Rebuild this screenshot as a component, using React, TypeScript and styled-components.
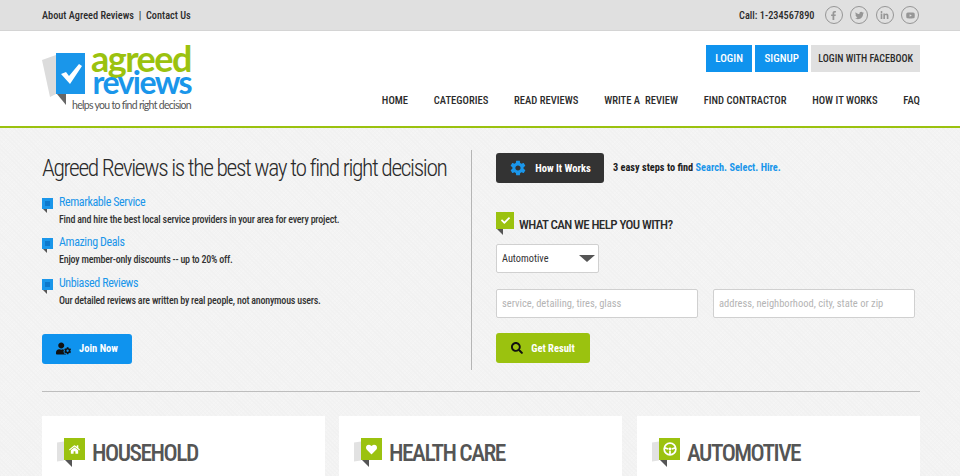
import React from "react";
import styled, { createGlobalStyle } from "styled-components";
import { FaFacebookF, FaTwitter, FaLinkedinIn, FaYoutube, FaHeart, FaHome, FaSearch, FaCheck, FaUserCog } from "react-icons/fa";
import { IoMdSettings } from "react-icons/io";

const GlobalStyle = createGlobalStyle`
  html, body {
    margin: 0;
    padding: 0;
    height: 476px;
    overflow: hidden;
    font-family: "Roboto", "Liberation Sans", sans-serif;
    font-stretch: 75%;
    background-color: #f3f3f3;
    color: #222;
  }
  * { box-sizing: border-box; }
`;

const Page = styled.div`
  width: 960px;
  height: 476px;
  overflow: hidden;
  background-color: #f3f3f3;
  background-image: repeating-linear-gradient(45deg, #f1f1f1 0 1px, transparent 1px 3px),
    repeating-linear-gradient(-45deg, #f5f5f5 0 1px, transparent 1px 3px);
`;

const TopBar = styled.div`
  height: 31px;
  background: #e0e0e0;
  border-bottom: 1px solid #d4d4d4;
  padding: 0 41px 0 42px;
  display: flex;
  align-items: center;
  justify-content: space-between;
`;

const TopLinks = styled.div`
  font-size: 10.3px;
  font-weight: 500;
  color: #2b2b2b;
  white-space: nowrap;
`;

const TopRight = styled.div`
  display: flex;
  align-items: center;
  gap: 7.5px;
`;

const Phone = styled.span`
  font-size: 10.3px;
  font-weight: 500;
  color: #2b2b2b;
  margin-right: 2.5px;
`;

const Social = styled.span`
  width: 18px;
  height: 18px;
  border-radius: 50%;
  border: 1px solid #969696;
  color: #969696;
  font-size: 9px;
  display: flex;
  align-items: center;
  justify-content: center;
`;

const Header = styled.header`
  height: 97px;
  background: #fff;
  border-bottom: 2px solid #9bc20f;
  padding: 0 40px 0 42px;
  display: flex;
  justify-content: space-between;
`;

const Logo = styled.div`
  display: flex;
  flex-direction: column;
  align-items: flex-end;
  width: 149px;
  padding-top: 13px;
`;

const LogoRow = styled.div`
  display: flex;
  align-items: flex-start;
  height: 54px;
`;

const LogoMark = styled.svg`
  width: 46px;
  height: 54px;
  margin-top: 9px;
  flex: none;
`;

const LogoWords = styled.div`
  display: flex;
  flex-direction: column;
  align-items: flex-end;
  margin-left: 5px;
  width: 98px;
`;

const LogoGreen = styled.span`
  font-family: "Lato", sans-serif;
  font-stretch: normal;
  font-size: 36px;
  font-weight: 700;
  line-height: 28px;
  letter-spacing: -1.5px;
  color: #9bc20f;
  white-space: nowrap;
`;

const LogoBlue = styled.span`
  font-family: "Lato", sans-serif;
  font-stretch: normal;
  font-size: 32px;
  font-weight: 700;
  line-height: 19px;
  letter-spacing: -1.6px;
  color: #1a96ea;
  white-space: nowrap;
`;

const LogoTag = styled.span`
  font-family: "Lato", sans-serif;
  font-stretch: normal;
  font-size: 10.5px;
  line-height: 14px;
  letter-spacing: -0.7px;
  color: #555;
  white-space: nowrap;
`;

const HeaderRight = styled.div`
  display: flex;
  flex-direction: column;
  align-items: flex-end;
  padding-top: 14px;
`;

const AuthRow = styled.div`
  display: flex;
  gap: 3.5px;
`;

const AuthButton = styled.button<{ $plain?: boolean }>`
  height: 27px;
  border: 0;
  margin: 0;
  padding: 0 ${(p) => (p.$plain ? "7px" : "9px")};
  font-family: "Roboto", sans-serif;
  font-stretch: 75%;
  font-size: ${(p) => (p.$plain ? "10px" : "11px")};
  font-weight: 500;
  background: ${(p) => (p.$plain ? "#e0e0e0" : "#0f93ee")};
  color: ${(p) => (p.$plain ? "#2b2b2b" : "#fff")};
  display: flex;
  align-items: center;
`;

const Nav = styled.nav`
  display: flex;
  gap: 25.8px;
  margin-top: 23px;
`;

const NavLink = styled.span`
  font-size: 10.6px;
  font-weight: 500;
  line-height: 12px;
  color: #2b2b2b;
  white-space: pre;
`;

const Main = styled.main`
  padding: 22px 40px 0 42px;
`;

const Hero = styled.section`
  display: flex;
  height: 220px;
`;

const HeroLeft = styled.div`
  width: 430px;
  border-right: 1px solid #b5b5b5;
`;

const HeroTitle = styled.h1`
  margin: 5px 0 0;
  font-size: 23.5px;
  font-weight: 300;
  line-height: 26px;
  letter-spacing: -1.38px;
  color: #2b2b2b;
  white-space: nowrap;
`;

const Features = styled.ul`
  list-style: none;
  margin: 14px 0 0;
  padding: 0;
  display: flex;
  flex-direction: column;
  gap: 9.3px;
`;

const Feature = styled.li`
  display: flex;
  gap: 6px;
`;

const Bullet = styled.span`
  position: relative;
  width: 11px;
  height: 11px;
  margin-top: 3px;
  background: #1a96ea;
  flex: none;
  display: flex;
  align-items: center;
  justify-content: center;
  &::before {
    content: "";
    width: 5px;
    height: 5px;
    background: #0d78cc;
  }
  &::after {
    content: "";
    position: absolute;
    left: 1px;
    top: 11px;
    border-top: 4px solid #555;
    border-left: 4px solid transparent;
  }
`;

const FeatureTitle = styled.div`
  font-size: 12px;
  line-height: 15px;
  letter-spacing: -0.4px;
  color: #1a96ea;
`;

const FeatureText = styled.div`
  font-size: 10px;
  font-weight: 500;
  line-height: 13px;
  letter-spacing: -0.21px;
  margin-top: 3px;
  color: #333;
`;

const IconButton = styled.button<{ $bg: string; $w: number }>`
  width: ${(p) => p.$w}px;
  height: 30px;
  border: 0;
  margin: 0;
  padding: 0;
  border-radius: 3px;
  background: ${(p) => p.$bg};
  color: #fff;
  font-family: "Roboto", sans-serif;
  font-stretch: 75%;
  font-size: 10.5px;
  font-weight: 700;
  display: flex;
  align-items: center;
  justify-content: center;
  gap: 8px;
`;

const JoinWrap = styled.div`
  margin-top: 27px;
`;

const HeroRight = styled.div`
  padding-left: 24px;
  flex: 1;
`;

const HowRow = styled.div`
  display: flex;
  align-items: center;
  gap: 9px;
  margin-top: 3px;
`;

const HowText = styled.span`
  font-size: 10.3px;
  font-weight: 700;
  color: #1b1b1b;
  margin-top: -2px;
`;

const Blue = styled.span`
  color: #1a96ea;
`;

const HelpRow = styled.div`
  display: flex;
  align-items: flex-start;
  gap: 5px;
  margin-top: 29px;
`;

const CheckBox = styled.span`
  position: relative;
  width: 18px;
  height: 17px;
  background: #9bc20f;
  color: #fff;
  font-size: 9px;
  display: flex;
  align-items: center;
  justify-content: center;
  &::after {
    content: "";
    position: absolute;
    left: 1px;
    top: 17px;
    border-top: 6px solid #555;
    border-left: 6px solid transparent;
  }
`;

const HelpTitle = styled.h2`
  margin: 5px 0 0;
  font-size: 13px;
  font-weight: 500;
  line-height: 15px;
  letter-spacing: -0.6px;
  color: #2b2b2b;
`;

const Select = styled.div`
  width: 103px;
  height: 29px;
  margin-top: 12px;
  background: #fff;
  border: 1px solid #d0d0d0;
  border-radius: 2px;
  padding: 0 3px 0 5px;
  display: flex;
  align-items: center;
  justify-content: space-between;
  font-size: 10.3px;
  color: #333;
  &::after {
    content: "";
    border-top: 7px solid #555;
    border-left: 8px solid transparent;
    border-right: 8px solid transparent;
  }
`;

const InputRow = styled.div`
  display: flex;
  gap: 15px;
  margin-top: 16px;
`;

const Input = styled.div<{ $w: number }>`
  width: ${(p) => p.$w}px;
  height: 29px;
  background: #fff;
  border: 1px solid #d0d0d0;
  border-radius: 2px;
  padding: 0 5px;
  display: flex;
  align-items: center;
  font-size: 10.5px;
  color: #b4b4b4;
`;

const ResultWrap = styled.div`
  margin-top: 15px;
`;

const Rule = styled.hr`
  margin: 21px 0 0;
  border: 0;
  border-top: 1px solid #bdbdbd;
`;

const Cards = styled.section`
  display: flex;
  gap: 14px;
  margin-top: 24px;
`;

const Card = styled.article`
  width: 283px;
  height: 80px;
  background: #fff;
  padding: 22px 15px 0 15px;
  display: flex;
  align-items: flex-start;
  &:last-child {
    margin-left: auto;
  }
`;

const CardIcon = styled.span`
  position: relative;
  width: 21px;
  height: 22px;
  margin: 0 7px 0 7px;
  background: #9bc20f;
  color: #fff;
  font-size: 11px;
  display: flex;
  align-items: center;
  justify-content: center;
  &::before {
    content: "";
    position: absolute;
    left: -7px;
    top: 4px;
    width: 7px;
    height: 19px;
    background: #e2e2e2;
    transform: skewY(-8deg);
  }
  &::after {
    content: "";
    position: absolute;
    left: 1px;
    top: 22px;
    border-top: 7px solid #555;
    border-left: 7px solid transparent;
  }
`;

const CardTitle = styled.h3`
  margin: 2px 0 0;
  font-size: 23.5px;
  font-weight: 500;
  line-height: 26px;
  letter-spacing: -1.5px;
  color: #555;
`;

const WheelIcon = () => (
  <svg width="14" height="14" viewBox="0 0 24 24" fill="none" stroke="#fff" strokeWidth="3">
    <circle cx="12" cy="12" r="10" />
    <path d="M3 10 L9 12 M21 10 L15 12 M12 15 V22" />
    <circle cx="12" cy="12" r="2.5" fill="#fff" stroke="none" />
  </svg>
);

const navItems = ["HOME", "CATEGORIES", "READ REVIEWS", "WRITE A  REVIEW", "FIND CONTRACTOR", "HOW IT WORKS", "FAQ"];

const features = [
  { title: "Remarkable Service", text: "Find and hire the best local service providers in your area for every project." },
  { title: "Amazing Deals", text: "Enjoy member-only discounts -- up to 20% off." },
  { title: "Unbiased Reviews", text: "Our detailed reviews are written by real people, not anonymous users." },
];

const App = () => {
  return (
    <Page>
      <GlobalStyle />
      <TopBar>
        <TopLinks>About Agreed Reviews &nbsp;|&nbsp; Contact Us</TopLinks>
        <TopRight>
          <Phone>Call: 1-234567890</Phone>
          <Social><FaFacebookF /></Social>
          <Social><FaTwitter /></Social>
          <Social><FaLinkedinIn /></Social>
          <Social><FaYoutube /></Social>
        </TopRight>
      </TopBar>
      <Header>
        <Logo>
          <LogoRow>
            <LogoMark viewBox="0 0 46 54">
              <path d="M0 7 L14 2 V41 L8 44 Z" fill="#dcdcdc" />
              <rect x="14" width="29" height="41" fill="#1a96ea" />
              <path d="M15 41 H24 V52 Z" fill="#666" />
              <path d="M19 21 L24 19 L27 23 L37 11 L40 13 L28 31 Z" fill="#fff" />
            </LogoMark>
            <LogoWords>
              <LogoGreen>agreed</LogoGreen>
              <LogoBlue>reviews</LogoBlue>
            </LogoWords>
          </LogoRow>
          <LogoTag>helps you to find right decision</LogoTag>
        </Logo>
        <HeaderRight>
          <AuthRow>
            <AuthButton>LOGIN</AuthButton>
            <AuthButton>SIGNUP</AuthButton>
            <AuthButton $plain>LOGIN WITH FACEBOOK</AuthButton>
          </AuthRow>
          <Nav>
            {navItems.map((item) => (
              <NavLink key={item}>{item}</NavLink>
            ))}
          </Nav>
        </HeaderRight>
      </Header>
      <Main>
        <Hero>
          <HeroLeft>
            <HeroTitle>Agreed Reviews is the best way to find right decision</HeroTitle>
            <Features>
              {features.map((f) => (
                <Feature key={f.title}>
                  <Bullet />
                  <div>
                    <FeatureTitle>{f.title}</FeatureTitle>
                    <FeatureText>{f.text}</FeatureText>
                  </div>
                </Feature>
              ))}
            </Features>
            <JoinWrap>
              <IconButton $bg="#0f93ee" $w={90}>
                <FaUserCog size={15} color="#111" />
                Join Now
              </IconButton>
            </JoinWrap>
          </HeroLeft>
          <HeroRight>
            <HowRow>
              <IconButton $bg="#333" $w={108}>
                <IoMdSettings size={18} color="#1a96ea" />
                How It Works
              </IconButton>
              <HowText>
                3 easy steps to find <Blue>Search. Select. Hire.</Blue>
              </HowText>
            </HowRow>
            <HelpRow>
              <CheckBox><FaCheck /></CheckBox>
              <HelpTitle>WHAT CAN WE HELP YOU WITH?</HelpTitle>
            </HelpRow>
            <Select>Automotive</Select>
            <InputRow>
              <Input $w={202}>service, detailing, tires, glass</Input>
              <Input $w={202}>address, neighborhood, city, state or zip</Input>
            </InputRow>
            <ResultWrap>
              <IconButton $bg="#9bc20f" $w={94}>
                <FaSearch size={12} color="#111" />
                Get Result
              </IconButton>
            </ResultWrap>
          </HeroRight>
        </Hero>
        <Rule />
        <Cards>
          <Card>
            <CardIcon><FaHome /></CardIcon>
            <CardTitle>HOUSEHOLD</CardTitle>
          </Card>
          <Card>
            <CardIcon><FaHeart /></CardIcon>
            <CardTitle>HEALTH CARE</CardTitle>
          </Card>
          <Card>
            <CardIcon><WheelIcon /></CardIcon>
            <CardTitle>AUTOMOTIVE</CardTitle>
          </Card>
        </Cards>
      </Main>
    </Page>
  );
};

export default App;
